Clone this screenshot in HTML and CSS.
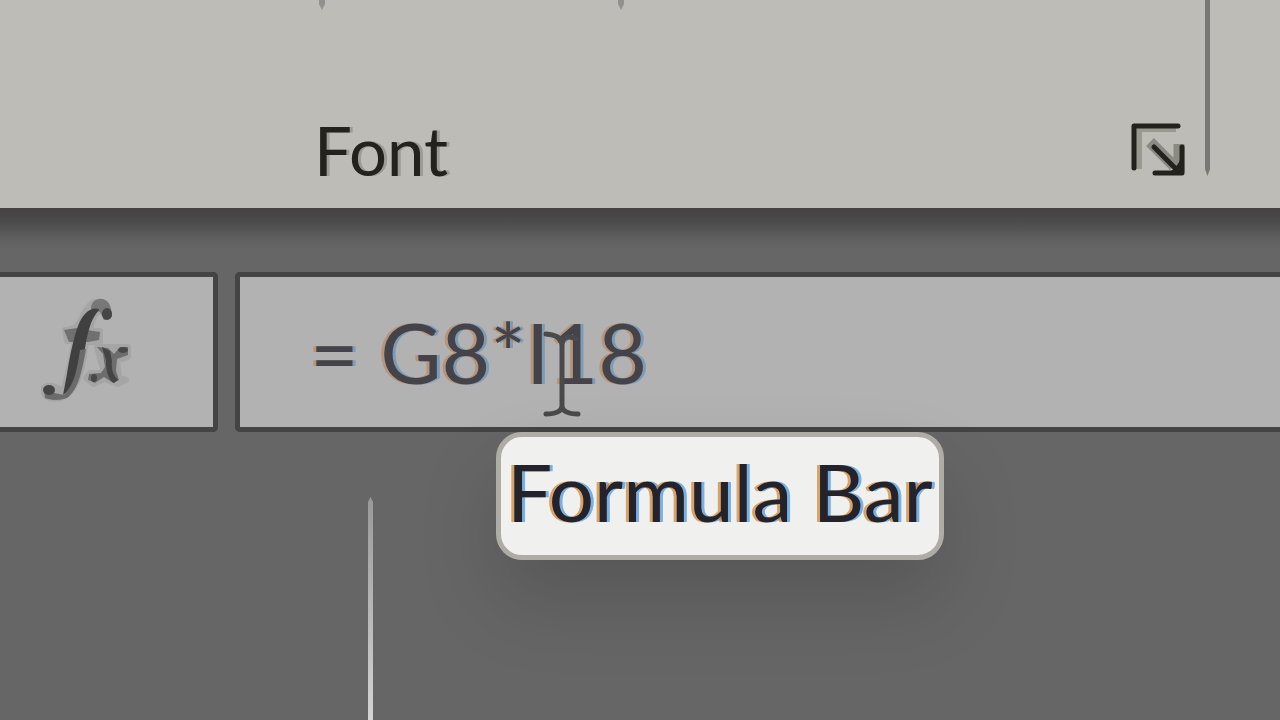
FILE: index.html
```html
<!DOCTYPE html>
<html lang="en">
<head>
    <meta charset="UTF-8">
    <meta name="viewport" content="width=device-width, initial-scale=1.0">
    <title>Formula Bar</title>
    <link rel="stylesheet" href="styles.css">
</head>
<body>
    <header class="ribbon">
        <section class="group">
            <div class="dividers">
                <span class="tick"></span>
                <span class="tick"></span>
            </div>
            <div class="group-footer">
                <span class="group-name">Font</span>
                <button class="launcher" type="button" aria-label="Font settings">
                    <svg width="55" height="54" viewBox="0 0 55 54" fill="none">
                        <path d="M9 47V7H46" stroke="#999891" stroke-width="6"/>
                        <path d="M20 20L44 44M49 22V50" stroke="#8a8982" stroke-width="11"/>
                        <path d="M4 46V4H48" stroke="#23221d" stroke-width="5" stroke-linecap="round" stroke-linejoin="round"/>
                        <path d="M24 25L48 49" stroke="#23221d" stroke-width="5" stroke-linecap="round"/>
                        <path d="M52 25V51H25" stroke="#23221d" stroke-width="5" stroke-linecap="round" stroke-linejoin="round"/>
                        <path d="M38 51C45 47 49 41 51 36V51Z" fill="#23221d"/>
                    </svg>
                </button>
            </div>
        </section>
        <span class="group-line"></span>
    </header>

    <main class="workspace">
        <div class="formula-row">
            <button class="fx-btn" type="button" aria-label="Insert function">
                <svg width="94" height="110" viewBox="38 294 94 110" fill="none">
                    <g stroke="#a5a5a5" stroke-width="6" stroke-linejoin="round" fill="#a5a5a5">
                        <path d="M109 316C107 300 94 297 86 310C80 320 80 329 65 330L67 341H75C71 359 69 374 63 391C57 387 49 383 44 388C42 398 51 400 61 398C78 392 82 370 86 342H100V331H90C92 320 94 312 102 311Z"/>
                        <path d="M97 347H128V357L117 360L119 378L126 380L118 384L104 379L94 384L86 378L90 373H104Z"/>
                    </g>
                    <path d="M91 309C91 296 109 295 111 309L112 317L104 320L100 312Z" fill="#787878"/>
                    <path d="M64 330L77 328L87 330L100 332L99 340L88 342H69Z" fill="#707070"/>
                    <path d="M99 309C90 306 82 315 78 326C73 339 69 361 67 374L63 395C77 386 81 373 84 355C87 334 90 320 99 310Z" fill="#404040"/>
                    <path d="M80 350L86 349C82 372 78 390 67 398C59 401 49 400 45 398L44 389L54 393L64 395C75 383 77 370 80 350Z" fill="#6b6b6b"/>
                    <ellipse cx="107" cy="314" rx="5" ry="6" fill="#454545"/>
                    <ellipse cx="49" cy="390" rx="6" ry="5" fill="#454545"/>
                    <path d="M97 347L108 348L114 354L120 347H128V355L117 359L116 371L119 380L113 383L104 377L95 383L88 380L89 374L101 373L105 367L103 354Z" fill="#6d6d6d"/>
                    <path d="M102 347L110 351L112 361C111 369 113 375 118 380L114 383C107 379 106 369 106 360Z" fill="#444"/>
                    <ellipse cx="123" cy="350" rx="5" ry="3" fill="#484848"/>
                    <ellipse cx="94" cy="378" rx="3" ry="4" fill="#484848"/>
                </svg>
            </button>
            <div class="formula-box">
                <input class="formula-input" type="text" value="= G8*I18" aria-label="Formula Bar" aria-describedby="formula-tip">
                <svg class="text-cursor" width="40" height="90" viewBox="0 0 40 90" fill="none">
                    <path d="M4 5C13 6 20 8 20 17C20 8 26 6 34 10M20 15V80M4 85C14 85 20 82 20 77C20 82 26 85 36 85" stroke="#4a4a4a" stroke-width="5" stroke-linecap="round"/>
                </svg>
                <div class="tooltip" id="formula-tip" role="tooltip">Formula Bar</div>
            </div>
        </div>
        <div class="sheet">
            <span class="column-line"></span>
        </div>
    </main>
</body>
</html>
```
FILE: styles.css
```css
* {
    box-sizing: border-box;
}
body {
    margin: 0;
    min-height: 100vh;
    display: flex;
    flex-direction: column;
    font-family: Lato, "Open Sans", sans-serif;
    background: #666;
    overflow: hidden;
}
button {
    font: inherit;
    cursor: pointer;
}

/* Ribbon */
.ribbon {
    display: flex;
    background: #bdbcb6;
    padding: 0 70px 32px 0;
}
.group {
    flex: 1;
    display: flex;
    flex-direction: column;
    justify-content: space-between;
    padding: 0 20px 0 314px;
}
.dividers {
    display: flex;
    gap: 292px;
    padding-left: 4px;
}
.tick {
    width: 6px;
    height: 10px;
    margin-left: 1px;
    background: #91918e;
    clip-path: polygon(0 0, 100% 0, 100% 40%, 50% 100%, 0 40%);
}
.group-footer {
    display: flex;
    justify-content: space-between;
    align-items: flex-end;
}
.group-name {
    font-size: 67px;
    line-height: 52px;
    color: #23221d;
    text-shadow: 3px 0 rgba(60, 60, 50, 0.25);
}
.launcher {
    padding: 0;
    border: none;
    background: none;
    line-height: 0;
}
.group-line {
    width: 5px;
    height: 176px;
    background: #777773;
    clip-path: polygon(0 0, 100% 0, 100% 96%, 50% 100%, 0 96%);
}

/* Formula bar */
.workspace {
    flex: 1;
    display: flex;
    flex-direction: column;
    padding-top: 64px;
    background: linear-gradient(#434141, #4c4c4c 14px, #606060 32px, #666 42px);
}
.formula-row {
    display: flex;
    gap: 17px;
}
.fx-btn {
    width: 218px;
    height: 160px;
    padding: 0 0 6px 38px;
    border: 5px solid #444;
    border-left: none;
    border-radius: 0 5px 5px 0;
    background: #b2b2b2;
    text-align: left;
    line-height: 0;
}
.formula-box {
    flex: 1;
    position: relative;
    height: 160px;
    border: 5px solid #444;
    border-right: none;
    border-radius: 5px 0 0 5px;
    background: #b2b2b2;
}
.formula-input {
    width: 100%;
    height: 100%;
    padding: 0 20px 2px 70px;
    border: none;
    outline: none;
    background: none;
    font-family: inherit;
    font-size: 84px;
    color: #444349;
    text-shadow: -3px 0 rgba(190, 105, 35, 0.4), 3px 0 rgba(45, 120, 190, 0.4);
}
.text-cursor {
    position: absolute;
    left: 302px;
    top: 52px;
    pointer-events: none;
}
.tooltip {
    position: absolute;
    left: 256px;
    top: 155px;
    padding: 6px 6px 16px;
    border: 5px solid #adada6;
    border-radius: 26px;
    background: #f0f0ef;
    box-shadow: 0 40px 80px rgba(0, 0, 0, 0.15);
    font-size: 80px;
    line-height: 96px;
    white-space: nowrap;
    color: #24232b;
    text-shadow: -3px 0 rgba(205, 120, 30, 0.65), 3px 0 rgba(40, 135, 215, 0.6);
}

/* Sheet */
.sheet {
    flex: 1;
    display: flex;
    padding: 65px 0 0 368px;
}
.column-line {
    width: 5px;
    background: linear-gradient(#999, #d4d4d4);
    clip-path: polygon(50% 0, 100% 5px, 100% 100%, 0 100%, 0 5px);
}
```
